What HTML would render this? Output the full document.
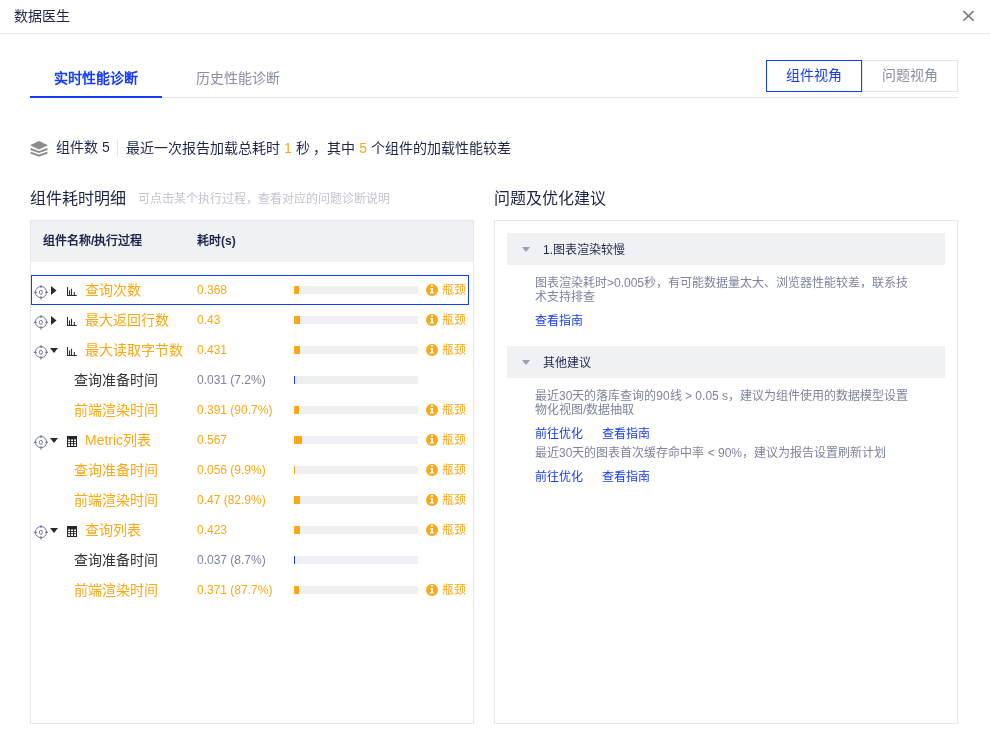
<!DOCTYPE html>
<html lang="zh-CN"><head><meta charset="utf-8"><style>
html,body{margin:0;padding:0;background:#fff;width:990px;height:733px;overflow:hidden;font-family:"Liberation Sans",sans-serif;}
div{box-sizing:border-box}
.a{position:absolute}
.t14{position:absolute;font-size:14px;line-height:20px;white-space:nowrap}
.t12{position:absolute;font-size:12px;line-height:20px;white-space:nowrap}
.t16{position:absolute;font-size:16px;line-height:20px;white-space:nowrap}
</style></head><body>
<div id="wrap" style="position:absolute;left:0;top:0;width:990px;height:733px;will-change:transform">
<div class="t14" style="left:14px;top:6px;color:#1e2546">数据医生</div>
<svg class="a" style="left:962px;top:10px" width="13" height="12" viewBox="0 0 13 12"><path d="M1.4 1.1L11.6 10.6M11.6 1.1L1.4 10.6" stroke="#7b7b7b" stroke-width="1.5"/></svg>
<div class="a" style="left:0;top:33px;width:990px;height:1px;background:#e8e8ef"></div>

<div class="t14" style="left:54px;top:68px;color:#163cf5;font-weight:bold">实时性能诊断</div>
<div class="t14" style="left:196px;top:68px;color:#8a8ea2">历史性能诊断</div>
<div class="a" style="left:30px;top:97px;width:928px;height:1px;background:#e6e6ef"></div>
<div class="a" style="left:30px;top:96px;width:132px;height:2px;background:#163cf5"></div>


<svg class="a" style="left:27px;top:138px" width="24" height="22" viewBox="0 0 24 22">
<path d="M12 3L21 7.35L12 11.6L3 7.35Z" fill="#8c8c8c"/>
<path d="M3.6 11L12 14.1L20.4 11" fill="none" stroke="#8c8c8c" stroke-width="1.9"/>
<path d="M3.6 14.6L12 17.7L20.4 14.6" fill="none" stroke="#8c8c8c" stroke-width="1.9"/>
</svg>
<div class="t14" style="left:56px;top:137px;color:#1e2546">组件数 5</div>
<div class="a" style="left:117px;top:140px;width:1px;height:16px;background:#e3e3ea"></div>
<div class="t14" style="left:126px;top:138px;color:#1e2546">最近一次报告加载总耗时 <span style="color:#fca814">1</span> 秒 ，其中 <span style="color:#fca814">5</span> 个组件的加载性能较差</div>

<div class="t16" style="left:30px;top:189px;color:#1e2546">组件耗时明细</div>
<div class="t12" style="left:138px;top:189px;color:#c2c3cf">可点击某个执行过程，查看对应的问题诊断说明</div>
<div class="t16" style="left:494px;top:189px;color:#1e2546">问题及优化建议</div>

<div class="a" style="left:30px;top:220px;width:444px;height:504px;border:1px solid #e6e6ee"></div>
<div class="a" style="left:31px;top:221px;width:442px;height:41px;background:#f0f1f4"></div>
<div class="t12" style="left:43px;top:231px;color:#1e2546;font-weight:bold">组件名称/执行过程</div>
<div class="t12" style="left:197px;top:231px;color:#1e2546;font-weight:bold">耗时(s)</div>
<div class="a" style="left:31px;top:275px;width:438px;height:30px;border:1px solid #163cf5"></div>
<div style="position:absolute;left:33px;top:284px;line-height:0"><svg width="16" height="16" viewBox="0 0 16 16" style="display:block"><g fill="none" stroke="#6f7799"><circle cx="8" cy="8.1" r="5.6" stroke-width="0.95"/><ellipse cx="7.9" cy="8.3" rx="1.5" ry="2" stroke-width="0.95"/></g><g stroke="#6b7394" stroke-width="1.15"><line x1="8" y1="1.3" x2="8" y2="4"/><line x1="8" y1="12.3" x2="8" y2="15.6"/><line x1="0.8" y1="8.3" x2="3.8" y2="8.3"/><line x1="12.2" y1="8.3" x2="15" y2="8.3"/></g></svg></div>
<div style="position:absolute;left:51px;top:286px;line-height:0"><svg class="arr" width="6" height="9" viewBox="0 0 6 9"><path d="M0 0L5.5 4.5L0 9Z" fill="#2b2b2b"/></svg></div>
<div style="position:absolute;left:67px;top:287px;line-height:0"><svg width="11" height="9" viewBox="0 0 11 9" style="display:block"><g stroke="#303030" stroke-width="1.1" fill="none"><path d="M0.5 0 V8.5 H9.8"/><path d="M2.5 3.4 V8.5"/><path d="M4.5 1.8 V8.5"/><path d="M7.3 4.9 V8.5"/></g></svg></div>
<div class="t14" style="left:85px;top:280px;color:#fca814">查询次数</div>
<div class="t12" style="left:197px;top:280px;color:#fca814">0.368</div>
<div style="position:absolute;left:294px;top:286px;width:124px;height:8px;background:#eff0f3"><div style="width:5px;height:8px;background:#fca814"></div></div>
<div style="position:absolute;left:426px;top:284px;line-height:0"><svg width="12" height="12" viewBox="0 0 12 12" style="display:block"><circle cx="6" cy="5.9" r="6" fill="#fca814"/><g fill="#fff"><rect x="5" y="1.1" width="1.95" height="1.6"/><path d="M4.1 3.9H6.95V8.1H7.8V9.6H3.9V8.1H5V5.2H4.1Z"/></g></svg></div>
<div class="t12" style="left:442px;top:280px;color:#fca814">瓶颈</div><div style="position:absolute;left:33px;top:314px;line-height:0"><svg width="16" height="16" viewBox="0 0 16 16" style="display:block"><g fill="none" stroke="#6f7799"><circle cx="8" cy="8.1" r="5.6" stroke-width="0.95"/><ellipse cx="7.9" cy="8.3" rx="1.5" ry="2" stroke-width="0.95"/></g><g stroke="#6b7394" stroke-width="1.15"><line x1="8" y1="1.3" x2="8" y2="4"/><line x1="8" y1="12.3" x2="8" y2="15.6"/><line x1="0.8" y1="8.3" x2="3.8" y2="8.3"/><line x1="12.2" y1="8.3" x2="15" y2="8.3"/></g></svg></div>
<div style="position:absolute;left:51px;top:316px;line-height:0"><svg class="arr" width="6" height="9" viewBox="0 0 6 9"><path d="M0 0L5.5 4.5L0 9Z" fill="#2b2b2b"/></svg></div>
<div style="position:absolute;left:67px;top:317px;line-height:0"><svg width="11" height="9" viewBox="0 0 11 9" style="display:block"><g stroke="#303030" stroke-width="1.1" fill="none"><path d="M0.5 0 V8.5 H9.8"/><path d="M2.5 3.4 V8.5"/><path d="M4.5 1.8 V8.5"/><path d="M7.3 4.9 V8.5"/></g></svg></div>
<div class="t14" style="left:85px;top:310px;color:#fca814">最大返回行数</div>
<div class="t12" style="left:197px;top:310px;color:#fca814">0.43</div>
<div style="position:absolute;left:294px;top:316px;width:124px;height:8px;background:#eff0f3"><div style="width:6px;height:8px;background:#fca814"></div></div>
<div style="position:absolute;left:426px;top:314px;line-height:0"><svg width="12" height="12" viewBox="0 0 12 12" style="display:block"><circle cx="6" cy="5.9" r="6" fill="#fca814"/><g fill="#fff"><rect x="5" y="1.1" width="1.95" height="1.6"/><path d="M4.1 3.9H6.95V8.1H7.8V9.6H3.9V8.1H5V5.2H4.1Z"/></g></svg></div>
<div class="t12" style="left:442px;top:310px;color:#fca814">瓶颈</div><div style="position:absolute;left:33px;top:344px;line-height:0"><svg width="16" height="16" viewBox="0 0 16 16" style="display:block"><g fill="none" stroke="#6f7799"><circle cx="8" cy="8.1" r="5.6" stroke-width="0.95"/><ellipse cx="7.9" cy="8.3" rx="1.5" ry="2" stroke-width="0.95"/></g><g stroke="#6b7394" stroke-width="1.15"><line x1="8" y1="1.3" x2="8" y2="4"/><line x1="8" y1="12.3" x2="8" y2="15.6"/><line x1="0.8" y1="8.3" x2="3.8" y2="8.3"/><line x1="12.2" y1="8.3" x2="15" y2="8.3"/></g></svg></div>
<div style="position:absolute;left:50px;top:348px;line-height:0"><svg width="8" height="5" viewBox="0 0 8 5" style="display:block"><path d="M0 0H8L4 5Z" fill="#2b2b2b"/></svg></div>
<div style="position:absolute;left:67px;top:347px;line-height:0"><svg width="11" height="9" viewBox="0 0 11 9" style="display:block"><g stroke="#303030" stroke-width="1.1" fill="none"><path d="M0.5 0 V8.5 H9.8"/><path d="M2.5 3.4 V8.5"/><path d="M4.5 1.8 V8.5"/><path d="M7.3 4.9 V8.5"/></g></svg></div>
<div class="t14" style="left:85px;top:340px;color:#fca814">最大读取字节数</div>
<div class="t12" style="left:197px;top:340px;color:#fca814">0.431</div>
<div style="position:absolute;left:294px;top:346px;width:124px;height:8px;background:#eff0f3"><div style="width:6px;height:8px;background:#fca814"></div></div>
<div style="position:absolute;left:426px;top:344px;line-height:0"><svg width="12" height="12" viewBox="0 0 12 12" style="display:block"><circle cx="6" cy="5.9" r="6" fill="#fca814"/><g fill="#fff"><rect x="5" y="1.1" width="1.95" height="1.6"/><path d="M4.1 3.9H6.95V8.1H7.8V9.6H3.9V8.1H5V5.2H4.1Z"/></g></svg></div>
<div class="t12" style="left:442px;top:340px;color:#fca814">瓶颈</div><div class="t14" style="left:74px;top:370px;color:#333333">查询准备时间</div>
<div class="t12" style="left:197px;top:370px;color:#7d839c">0.031 (7.2%)</div>
<div style="position:absolute;left:294px;top:376px;width:124px;height:8px;background:#eff0f3"><div style="width:1px;height:8px;background:#163cf5"></div></div><div class="t14" style="left:74px;top:400px;color:#fca814">前端渲染时间</div>
<div class="t12" style="left:197px;top:400px;color:#fca814">0.391 (90.7%)</div>
<div style="position:absolute;left:294px;top:406px;width:124px;height:8px;background:#eff0f3"><div style="width:5px;height:8px;background:#fca814"></div></div>
<div style="position:absolute;left:426px;top:404px;line-height:0"><svg width="12" height="12" viewBox="0 0 12 12" style="display:block"><circle cx="6" cy="5.9" r="6" fill="#fca814"/><g fill="#fff"><rect x="5" y="1.1" width="1.95" height="1.6"/><path d="M4.1 3.9H6.95V8.1H7.8V9.6H3.9V8.1H5V5.2H4.1Z"/></g></svg></div>
<div class="t12" style="left:442px;top:400px;color:#fca814">瓶颈</div><div style="position:absolute;left:33px;top:434px;line-height:0"><svg width="16" height="16" viewBox="0 0 16 16" style="display:block"><g fill="none" stroke="#6f7799"><circle cx="8" cy="8.1" r="5.6" stroke-width="0.95"/><ellipse cx="7.9" cy="8.3" rx="1.5" ry="2" stroke-width="0.95"/></g><g stroke="#6b7394" stroke-width="1.15"><line x1="8" y1="1.3" x2="8" y2="4"/><line x1="8" y1="12.3" x2="8" y2="15.6"/><line x1="0.8" y1="8.3" x2="3.8" y2="8.3"/><line x1="12.2" y1="8.3" x2="15" y2="8.3"/></g></svg></div>
<div style="position:absolute;left:50px;top:438px;line-height:0"><svg width="8" height="5" viewBox="0 0 8 5" style="display:block"><path d="M0 0H8L4 5Z" fill="#2b2b2b"/></svg></div>
<div style="position:absolute;left:67px;top:436px;line-height:0"><svg width="10" height="11" viewBox="0 0 10 11" style="display:block"><rect width="10" height="11" fill="#262626"/><g fill="#fff"><rect x="1.1" y="3.4" width="1.9" height="1.7"/><rect x="4.1" y="3.4" width="1.9" height="1.7"/><rect x="7.1" y="3.4" width="1.9" height="1.7"/><rect x="1.1" y="5.9" width="1.9" height="1.4"/><rect x="4.1" y="5.9" width="1.9" height="1.4"/><rect x="7.1" y="5.9" width="1.9" height="1.4"/><rect x="1.1" y="8.1" width="1.9" height="1.9"/><rect x="4.1" y="8.1" width="1.9" height="1.9"/><rect x="7.1" y="8.1" width="1.9" height="1.9"/></g></svg></div>
<div class="t14" style="left:85px;top:430px;color:#fca814">Metric列表</div>
<div class="t12" style="left:197px;top:430px;color:#fca814">0.567</div>
<div style="position:absolute;left:294px;top:436px;width:124px;height:8px;background:#eff0f3"><div style="width:8px;height:8px;background:#fca814"></div></div>
<div style="position:absolute;left:426px;top:434px;line-height:0"><svg width="12" height="12" viewBox="0 0 12 12" style="display:block"><circle cx="6" cy="5.9" r="6" fill="#fca814"/><g fill="#fff"><rect x="5" y="1.1" width="1.95" height="1.6"/><path d="M4.1 3.9H6.95V8.1H7.8V9.6H3.9V8.1H5V5.2H4.1Z"/></g></svg></div>
<div class="t12" style="left:442px;top:430px;color:#fca814">瓶颈</div><div class="t14" style="left:74px;top:460px;color:#fca814">查询准备时间</div>
<div class="t12" style="left:197px;top:460px;color:#fca814">0.056 (9.9%)</div>
<div style="position:absolute;left:294px;top:466px;width:124px;height:8px;background:#eff0f3"><div style="width:1px;height:8px;background:#fca814"></div></div>
<div style="position:absolute;left:426px;top:464px;line-height:0"><svg width="12" height="12" viewBox="0 0 12 12" style="display:block"><circle cx="6" cy="5.9" r="6" fill="#fca814"/><g fill="#fff"><rect x="5" y="1.1" width="1.95" height="1.6"/><path d="M4.1 3.9H6.95V8.1H7.8V9.6H3.9V8.1H5V5.2H4.1Z"/></g></svg></div>
<div class="t12" style="left:442px;top:460px;color:#fca814">瓶颈</div><div class="t14" style="left:74px;top:490px;color:#fca814">前端渲染时间</div>
<div class="t12" style="left:197px;top:490px;color:#fca814">0.47 (82.9%)</div>
<div style="position:absolute;left:294px;top:496px;width:124px;height:8px;background:#eff0f3"><div style="width:6px;height:8px;background:#fca814"></div></div>
<div style="position:absolute;left:426px;top:494px;line-height:0"><svg width="12" height="12" viewBox="0 0 12 12" style="display:block"><circle cx="6" cy="5.9" r="6" fill="#fca814"/><g fill="#fff"><rect x="5" y="1.1" width="1.95" height="1.6"/><path d="M4.1 3.9H6.95V8.1H7.8V9.6H3.9V8.1H5V5.2H4.1Z"/></g></svg></div>
<div class="t12" style="left:442px;top:490px;color:#fca814">瓶颈</div><div style="position:absolute;left:33px;top:524px;line-height:0"><svg width="16" height="16" viewBox="0 0 16 16" style="display:block"><g fill="none" stroke="#6f7799"><circle cx="8" cy="8.1" r="5.6" stroke-width="0.95"/><ellipse cx="7.9" cy="8.3" rx="1.5" ry="2" stroke-width="0.95"/></g><g stroke="#6b7394" stroke-width="1.15"><line x1="8" y1="1.3" x2="8" y2="4"/><line x1="8" y1="12.3" x2="8" y2="15.6"/><line x1="0.8" y1="8.3" x2="3.8" y2="8.3"/><line x1="12.2" y1="8.3" x2="15" y2="8.3"/></g></svg></div>
<div style="position:absolute;left:50px;top:528px;line-height:0"><svg width="8" height="5" viewBox="0 0 8 5" style="display:block"><path d="M0 0H8L4 5Z" fill="#2b2b2b"/></svg></div>
<div style="position:absolute;left:67px;top:526px;line-height:0"><svg width="10" height="11" viewBox="0 0 10 11" style="display:block"><rect width="10" height="11" fill="#262626"/><g fill="#fff"><rect x="1.1" y="3.4" width="1.9" height="1.7"/><rect x="4.1" y="3.4" width="1.9" height="1.7"/><rect x="7.1" y="3.4" width="1.9" height="1.7"/><rect x="1.1" y="5.9" width="1.9" height="1.4"/><rect x="4.1" y="5.9" width="1.9" height="1.4"/><rect x="7.1" y="5.9" width="1.9" height="1.4"/><rect x="1.1" y="8.1" width="1.9" height="1.9"/><rect x="4.1" y="8.1" width="1.9" height="1.9"/><rect x="7.1" y="8.1" width="1.9" height="1.9"/></g></svg></div>
<div class="t14" style="left:85px;top:520px;color:#fca814">查询列表</div>
<div class="t12" style="left:197px;top:520px;color:#fca814">0.423</div>
<div style="position:absolute;left:294px;top:526px;width:124px;height:8px;background:#eff0f3"><div style="width:6px;height:8px;background:#fca814"></div></div>
<div style="position:absolute;left:426px;top:524px;line-height:0"><svg width="12" height="12" viewBox="0 0 12 12" style="display:block"><circle cx="6" cy="5.9" r="6" fill="#fca814"/><g fill="#fff"><rect x="5" y="1.1" width="1.95" height="1.6"/><path d="M4.1 3.9H6.95V8.1H7.8V9.6H3.9V8.1H5V5.2H4.1Z"/></g></svg></div>
<div class="t12" style="left:442px;top:520px;color:#fca814">瓶颈</div><div class="t14" style="left:74px;top:550px;color:#333333">查询准备时间</div>
<div class="t12" style="left:197px;top:550px;color:#7d839c">0.037 (8.7%)</div>
<div style="position:absolute;left:294px;top:556px;width:124px;height:8px;background:#eff0f3"><div style="width:1px;height:8px;background:#163cf5"></div></div><div class="t14" style="left:74px;top:580px;color:#fca814">前端渲染时间</div>
<div class="t12" style="left:197px;top:580px;color:#fca814">0.371 (87.7%)</div>
<div style="position:absolute;left:294px;top:586px;width:124px;height:8px;background:#eff0f3"><div style="width:5px;height:8px;background:#fca814"></div></div>
<div style="position:absolute;left:426px;top:584px;line-height:0"><svg width="12" height="12" viewBox="0 0 12 12" style="display:block"><circle cx="6" cy="5.9" r="6" fill="#fca814"/><g fill="#fff"><rect x="5" y="1.1" width="1.95" height="1.6"/><path d="M4.1 3.9H6.95V8.1H7.8V9.6H3.9V8.1H5V5.2H4.1Z"/></g></svg></div>
<div class="t12" style="left:442px;top:580px;color:#fca814">瓶颈</div>

<div class="a" style="left:494px;top:220px;width:464px;height:504px;border:1px solid #e6e6ee"></div>
<div class="a" style="left:507px;top:233px;width:438px;height:32px;background:#f0f1f4"></div>
<svg class="a" style="left:522px;top:247px" width="8" height="6" viewBox="0 0 8 6"><path d="M0 0H8L4 5Z" fill="#9b9db2"/></svg>
<div class="t12" style="left:543px;top:240px;color:#1e2546">1.图表渲染较慢</div>
<div class="a" style="left:535px;top:276px;width:380px;font-size:12px;line-height:14px;color:#7d839c">图表渲染耗时&gt;0.005秒，有可能数据量太大、浏览器性能较差，联系技术支持排查</div>
<div class="t12" style="left:535px;top:311px;color:#163cf5">查看指南</div>

<div class="a" style="left:507px;top:346px;width:438px;height:32px;background:#f0f1f4"></div>
<svg class="a" style="left:522px;top:360px" width="8" height="6" viewBox="0 0 8 6"><path d="M0 0H8L4 5Z" fill="#9b9db2"/></svg>
<div class="t12" style="left:543px;top:353px;color:#1e2546">其他建议</div>
<div class="a" style="left:535px;top:389px;width:380px;font-size:12px;line-height:14px;color:#7d839c">最近30天的落库查询的90线 &gt; 0.05 s，建议为组件使用的数据模型设置物化视图/数据抽取</div>
<div class="t12" style="left:535px;top:424px;color:#163cf5">前往优化</div>
<div class="t12" style="left:602px;top:424px;color:#163cf5">查看指南</div>
<div class="t12" style="left:535px;top:443px;color:#7d839c">最近30天的图表首次缓存命中率 &lt; 90%，建议为报告设置刷新计划</div>
<div class="t12" style="left:535px;top:467px;color:#163cf5">前往优化</div>
<div class="t12" style="left:602px;top:467px;color:#163cf5">查看指南</div>
</div>
<div class="a" style="left:862px;top:60px;width:96px;height:32px;border:1px solid #e3e3ec"></div>
<div class="a" style="left:766px;top:60px;width:96px;height:32px;border:1px solid #163cf5"></div>
<div class="t14" style="left:786px;top:65px;color:#163cf5">组件视角</div>
<div class="t14" style="left:882px;top:65px;color:#8a8ea2">问题视角</div>
</body></html>
